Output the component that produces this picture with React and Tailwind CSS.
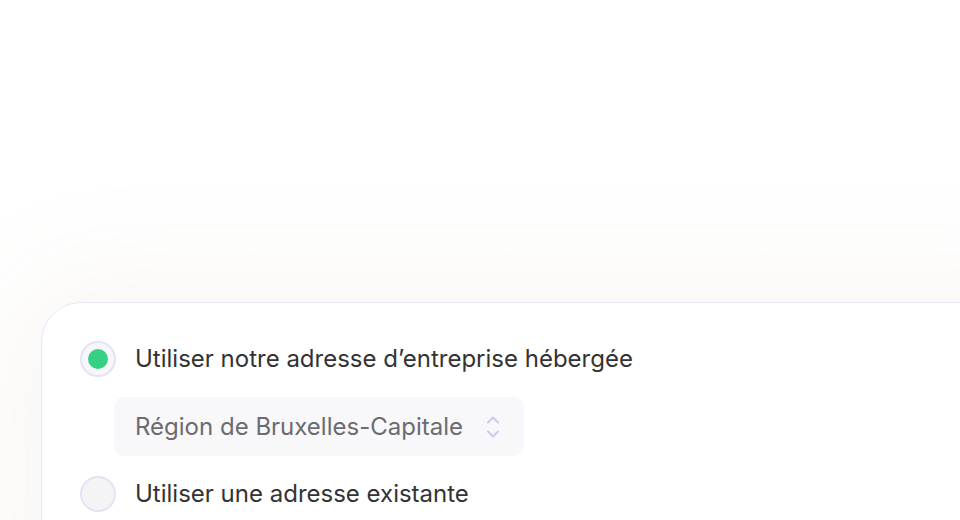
export default function App() {
  return (
    <div
      className="h-[520px] w-[960px] overflow-hidden bg-white"
      style={{ fontFamily: "Inter, 'Noto Sans', sans-serif" }}
    >
      <div className="ml-[41px] mt-[302px] h-[300px] w-[1000px] rounded-tl-[40px] border border-[#e9e7f6] bg-white px-[38px] pt-[38px] shadow-[0_10px_120px_30px_rgba(170,140,100,0.08)]">
        <div className="flex flex-col gap-5">
          {/* option 1 */}
          <label className="flex items-center gap-[19px]">
            <span className="flex h-9 w-9 items-center justify-center rounded-full border-2 border-[#e4e2f3] bg-[#f7f7fa]">
              <span className="h-5 w-5 rounded-full bg-[#34d184]" />
            </span>
            <span className="text-[24px] leading-none text-[#333333]">
              Utiliser notre adresse d’entreprise hébergée
            </span>
          </label>

          {/* select */}
          <div className="ml-[34px] flex h-[59px] w-[410px] items-center justify-between rounded-[10px] bg-[#f8f8fb] pl-[21px] pr-[24px]">
            <span className="text-[24px] leading-none text-[#6b6b70]">
              Région de Bruxelles-Capitale
            </span>
            <svg width="14" height="24" viewBox="0 0 14 24" fill="none" stroke="#ccc8ee" strokeWidth="2" strokeLinecap="round" strokeLinejoin="round">
              <path d="M2 7.5 L7 2.5 L12 7.5" />
              <path d="M2 16.5 L7 21.5 L12 16.5" />
            </svg>
          </div>

          {/* option 2 */}
          <label className="flex items-center gap-[19px]">
            <span className="h-9 w-9 rounded-full border-2 border-[#e4e2f3] bg-[#f4f4f6]" />
            <span className="text-[24px] leading-none text-[#333333]">
              Utiliser une adresse existante
            </span>
          </label>
        </div>
      </div>
    </div>
  );
}
